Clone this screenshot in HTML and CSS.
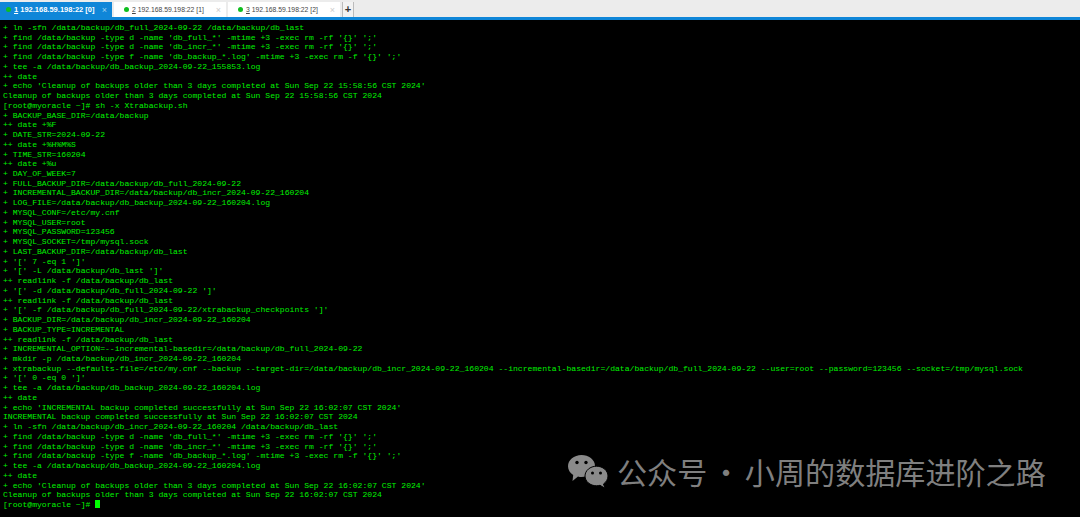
FILE: index.html
```html
<!DOCTYPE html>
<html lang="en">
<head>
<meta charset="utf-8">
<title>Xshell</title>
<link rel="stylesheet" href="styles.css">
</head>
<body>
<div class="tabbar">
  <div class="tab active"><span class="dot"></span><span class="tabname"><u>1</u> 192.168.59.198:22 [0]</span><span class="close">×</span></div>
  <div class="tab"><span class="dot"></span><span class="tabname"><u>2</u> 192.168.59.198:22 [1]</span><span class="close">×</span></div>
  <div class="tab"><span class="dot"></span><span class="tabname"><u>3</u> 192.168.59.198:22 [2]</span><span class="close">×</span></div>
  <div class="addtab">+</div>
</div>
<div class="accent"></div>
<main class="term">
<pre class="output">+ ln -sfn /data/backup/db_full_2024-09-22 /data/backup/db_last
+ find /data/backup -type d -name 'db_full_*' -mtime +3 -exec rm -rf '{}' ';'
+ find /data/backup -type d -name 'db_incr_*' -mtime +3 -exec rm -rf '{}' ';'
+ find /data/backup -type f -name 'db_backup_*.log' -mtime +3 -exec rm -f '{}' ';'
+ tee -a /data/backup/db_backup_2024-09-22_155853.log
++ date
+ echo 'Cleanup of backups older than 3 days completed at Sun Sep 22 15:58:56 CST 2024'
Cleanup of backups older than 3 days completed at Sun Sep 22 15:58:56 CST 2024
[root@myoracle ~]# sh -x Xtrabackup.sh
+ BACKUP_BASE_DIR=/data/backup
++ date +%F
+ DATE_STR=2024-09-22
++ date +%H%M%S
+ TIME_STR=160204
++ date +%u
+ DAY_OF_WEEK=7
+ FULL_BACKUP_DIR=/data/backup/db_full_2024-09-22
+ INCREMENTAL_BACKUP_DIR=/data/backup/db_incr_2024-09-22_160204
+ LOG_FILE=/data/backup/db_backup_2024-09-22_160204.log
+ MYSQL_CONF=/etc/my.cnf
+ MYSQL_USER=root
+ MYSQL_PASSWORD=123456
+ MYSQL_SOCKET=/tmp/mysql.sock
+ LAST_BACKUP_DIR=/data/backup/db_last
+ '[' 7 -eq 1 ']'
+ '[' -L /data/backup/db_last ']'
++ readlink -f /data/backup/db_last
+ '[' -d /data/backup/db_full_2024-09-22 ']'
++ readlink -f /data/backup/db_last
+ '[' -f /data/backup/db_full_2024-09-22/xtrabackup_checkpoints ']'
+ BACKUP_DIR=/data/backup/db_incr_2024-09-22_160204
+ BACKUP_TYPE=INCREMENTAL
++ readlink -f /data/backup/db_last
+ INCREMENTAL_OPTION=--incremental-basedir=/data/backup/db_full_2024-09-22
+ mkdir -p /data/backup/db_incr_2024-09-22_160204
+ xtrabackup --defaults-file=/etc/my.cnf --backup --target-dir=/data/backup/db_incr_2024-09-22_160204 --incremental-basedir=/data/backup/db_full_2024-09-22 --user=root --password=123456 --socket=/tmp/mysql.sock
+ '[' 0 -eq 0 ']'
+ tee -a /data/backup/db_backup_2024-09-22_160204.log
++ date
+ echo 'INCREMENTAL backup completed successfully at Sun Sep 22 16:02:07 CST 2024'
INCREMENTAL backup completed successfully at Sun Sep 22 16:02:07 CST 2024
+ ln -sfn /data/backup/db_incr_2024-09-22_160204 /data/backup/db_last
+ find /data/backup -type d -name 'db_full_*' -mtime +3 -exec rm -rf '{}' ';'
+ find /data/backup -type d -name 'db_incr_*' -mtime +3 -exec rm -rf '{}' ';'
+ find /data/backup -type f -name 'db_backup_*.log' -mtime +3 -exec rm -f '{}' ';'
+ tee -a /data/backup/db_backup_2024-09-22_160204.log
++ date
+ echo 'Cleanup of backups older than 3 days completed at Sun Sep 22 16:02:07 CST 2024'
Cleanup of backups older than 3 days completed at Sun Sep 22 16:02:07 CST 2024
[root@myoracle ~]# <span class="cursor"></span></pre>
<div class="watermark">
  <svg class="wechat" width="42" height="35" viewBox="0 0 41 35" aria-hidden="true">
    <path class="bubble" d="M14 1C6.500 1 .5 6 .5 12.200c0 3.600 2 6.600 5.200 8.800L5 27l5.500-4.600c1.300.4 2.200.6 3.500.6 7 0 13.500-5 13.500-11.200S21 1 14 1z"/>
    <circle class="eye" cx="9.500" cy="8.500" r="1.700"/><circle class="eye" cx="18.500" cy="8.500" r="1.700"/>
    <path class="bubble lower" d="M40.500 22c0-5.400-5.200-9.800-11.500-9.800S17.500 16.600 17.500 22s5.200 9.800 11.500 9.800c1.200 0 2.400-.2 3.500-.5l5 3-1.500-4.300c2.700-1.900 4.500-4.800 4.500-8z"/>
    <circle class="eye" cx="25" cy="19" r="1.500"/><circle class="eye" cx="33" cy="19" r="1.500"/>
  </svg>
  <span class="wmtext">公众号 · 小周的数据库进阶之路</span>
</div>
</main>
</body>
</html>
```
FILE: styles.css
```css
* { box-sizing: border-box; }
html, body { margin: 0; height: 100%; background: #000; overflow: hidden; }
body { display: flex; flex-direction: column; }
.tabbar { display: flex; height: 17px; padding-top: 2px; background: #ececec; align-items: stretch; gap: 2px; flex: none; }
.tab { width: 112px; display: flex; align-items: center; padding-left: 10px; background: #fff; color: #444; font: 6.800px "Liberation Sans", sans-serif; }
.tab.active { padding-left: 6px; background: #0f86d8; color: #fff; font: bold 7.500px "Liberation Sans", sans-serif; }
.dot { width: 5px; height: 5px; border-radius: 50%; background: #0fbf1f; margin-right: 3px; flex: none; }
.tabname { flex: 1; white-space: nowrap; }
.close { color: #ccc; font: 9px "Liberation Sans", sans-serif; margin-right: 5px; }
.active .close { color: #9fd0f0; }
.addtab { width: 12px; background: #f2f2f2; color: #333; font: bold 11px "Liberation Sans", sans-serif; text-align: center; line-height: 15px; border-left: 1px solid #bbb; border-right: 1px solid #bbb; }
.accent { height: 3px; background: #0f86d8; flex: none; }
.term { flex: 1; position: relative; background: #000; padding: 3px 0 0 3px; overflow: hidden; }
.output { margin: 0; color: #00f000; font: 8.100px/9.740px "Liberation Mono", monospace; white-space: pre; }
.cursor { display: inline-block; width: 5px; height: 8px; background: #00ff00; vertical-align: -1px; }
.watermark { position: absolute; left: 567px; top: 434px; display: flex; align-items: center; gap: 8px; color: #7f7f7f; }
.wechat { flex: none; }
.bubble { fill: #8a8a8a; }
.lower { stroke: #000; stroke-width: 1; }
.eye { fill: #000; }
.wmtext { font: 30.100px/1 "Noto Sans CJK SC", sans-serif; word-spacing: -3px; white-space: nowrap; color: #7f7f7f; }
```
